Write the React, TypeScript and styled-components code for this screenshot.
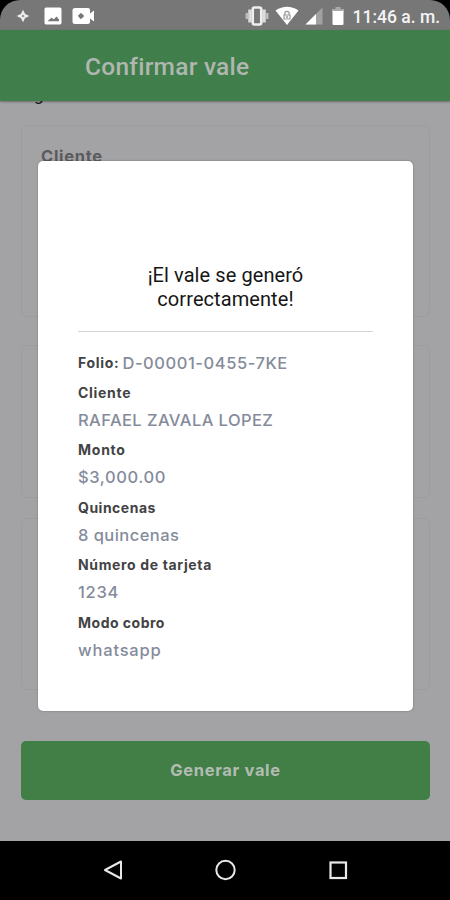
import React from "react";
import styled, { createGlobalStyle } from "styled-components";

const GlobalStyle = createGlobalStyle`
  * { box-sizing: border-box; }
  body { margin: 0; background: #000; font-family: Roboto, "Liberation Sans", sans-serif; }
`;

const Phone = styled.div`
  position: relative;
  width: 450px;
  height: 900px;
  display: flex;
  flex-direction: column;
  overflow: hidden;
  background: #000;
`;

const StatusBar = styled.div`
  height: 30px;
  flex: none;
  display: flex;
  align-items: center;
  justify-content: space-between;
  padding: 2px 10px 0 16px;
  background: #777;
  border-radius: 20px 20px 0 0;
`;

const StatusGroup = styled.div<{ $gap: number }>`
  display: flex;
  align-items: center;
  gap: ${(p) => p.$gap}px;

  svg { display: block; flex: none; }
`;

const Clock = styled.span`
  font-size: 17.5px;
  font-weight: 500;
  line-height: 28px;
  color: #f4f4f4;
  padding-top: 1px;
  white-space: nowrap;
`;

const Header = styled.header`
  position: relative;
  z-index: 1;
  height: 70.5px;
  flex: none;
  display: flex;
  align-items: center;
  padding: 4px 0 0 85px;
  background: #407f4b;
  box-shadow: 0 1px 2px rgba(0, 0, 0, 0.35);
`;

const HeaderTitle = styled.h1`
  margin: 0;
  font-size: 24.5px;
  font-weight: 500;
  line-height: 32px;
  letter-spacing: 0.25px;
  color: #b0b6b0;
`;

const Content = styled.main`
  height: 740px;
  flex: none;
  display: flex;
  flex-direction: column;
  padding: 0 20px 0 21px;
  background: #a3a3a5;
`;

const Intro = styled.div`
  height: 24.5px;
  padding-left: 13px;
  font-size: 17px;
  line-height: 20px;
  color: #111;

  span { display: block; margin-top: -16px; }
`;

const Card = styled.section<{ $height: number; $gap: number }>`
  height: ${(p) => p.$height}px;
  flex: none;
  margin-bottom: ${(p) => p.$gap}px;
  padding: 19px 19px;
  border: 1px solid #9d9d9f;
  border-radius: 6px;
`;

const CardTitle = styled.h2`
  margin: 0;
  font: 700 16.500px/22px Inter, sans-serif;
  letter-spacing: 0.7px;
  color: #5b5b5e;
`;

const SubmitButton = styled.button`
  height: 59.5px;
  flex: none;
  padding: 0;
  border: 0;
  border-radius: 5px;
  background: #417f47;
  color: #b3bcb2;
  font: 700 16.5px/59px Inter, sans-serif;
  letter-spacing: 0.65px;
`;

const NavBar = styled.nav`
  height: 59px;
  flex: none;
  display: flex;
  justify-content: center;
  align-items: center;
  gap: 88px;
  padding-bottom: 1px;

  svg { display: block; }
`;

const Dialog = styled.div`
  position: absolute;
  z-index: 2;
  left: 38px;
  top: 160.5px;
  width: 375px;
  height: 550.5px;
  padding: 102.5px 40px 0;
  border-radius: 5px;
  background: #fff;
  box-shadow: 0 0 2px rgba(0, 0, 0, 0.35);
`;

const DialogTitle = styled.p`
  margin: 0;
  height: 68px;
  text-align: center;
  font-size: 20px;
  line-height: 24px;
  letter-spacing: 0.08px;
  color: #161616;
`;

const Divider = styled.hr`
  margin: 0 0 17px;
  border: 0;
  height: 1px;
  background: #d4d4d4;
`;

const FolioRow = styled.div`
  display: flex;
  align-items: center;
  gap: 3px;
  height: 28px;
`;

const Entry = styled.div`
  height: 57.4px;
  padding-top: 2px;
`;

const Label = styled.div<{ $track: number }>`
  height: 28px;
  font: 700 14px/28px Inter, sans-serif;
  letter-spacing: ${(p) => p.$track}px;
  color: #434345;
  white-space: nowrap;
`;

const Value = styled.div<{ $track: number }>`
  height: 27px;
  font: 500 16.5px/27px Inter, sans-serif;
  letter-spacing: ${(p) => p.$track}px;
  color: #858b9b;
  white-space: nowrap;
`;

const entries = [
  { label: "Cliente", lt: 0.7, value: "RAFAEL ZAVALA LOPEZ", vt: 0.42 },
  { label: "Monto", lt: 0.75, value: "$3,000.00", vt: 0.6 },
  { label: "Quincenas", lt: 0.5, value: "8 quincenas", vt: 0.45 },
  { label: "Número de tarjeta", lt: 0.65, value: "1234", vt: 0.75 },
  { label: "Modo cobro", lt: 0.5, value: "whatsapp", vt: 0.8 },
];

const DiamondIcon = () => (
  <svg width="14" height="14" viewBox="0 0 14 14">
    <path d="M7 3 8.300 5.700 11 7 8.300 8.300 7 11 5.700 8.300 3 7 5.700 5.700Z" fill="none" stroke="#eee" strokeWidth="2" />
  </svg>
);

const ImageIcon = () => (
  <svg width="18" height="18" viewBox="0 0 18 18">
    <path fillRule="evenodd" d="M2 .5h14A1.700 1.700 0 0 1 17.500 2v14a1.700 1.700 0 0 1-1.500 1.500H2A1.700 1.700 0 0 1 .5 16V2A1.700 1.700 0 0 1 2 .5ZM3.500 14.300h11.500V12.500l-2.500-3-2.600 2.800-2.600-1.600Z" fill="#fff" />
  </svg>
);

const VideoIcon = () => (
  <svg width="23" height="18" viewBox="0 0 23 18">
    <path d="M3 1h13a2 2 0 0 1 2 2v3.500L22 3.500v11l-4-3V15a2 2 0 0 1-2 2H3a2.500 2.500 0 0 1-2.500-2.500v-11A2.500 2.500 0 0 1 3 1Z" fill="#fff" />
    <path d="M9 6.300 11.700 9 9 11.700 6.300 9Z" fill="#777" stroke="#777" strokeLinejoin="round" />
  </svg>
);

const VibrateIcon = () => (
  <svg width="24" height="20" viewBox="0 0 24 20">
    <path d="M5 3.500v13M19 3.500v13" stroke="#ddd" strokeWidth="3.500" />
    <path d="M1.800 7v6M22.200 7v6" stroke="#bbb" strokeWidth="2.500" />
    <rect x="7.800" y="1.500" width="8.400" height="17" rx="1.500" fill="#777" stroke="#eee" strokeWidth="2.500" />
  </svg>
);

const WifiIcon = () => (
  <svg width="24" height="20" viewBox="0 0 24 20">
    <path d="M.5 4.500Q12-3 23.500 4.500L12 19Z" fill="#fff" />
    <path d="M9.800 9V7.500a2.200 2.200 0 0 1 4.400 0V9M9 9h6v4H9Z" fill="none" stroke="#999" strokeWidth="1.200" />
    <circle cx="12" cy="11" r="1" fill="#999" />
  </svg>
);

const SignalIcon = () => (
  <svg width="18" height="18" viewBox="0 0 18 18">
    <path d="M17.500.5v17H.5Z" fill="#a2a2a2" />
    <path d="M11 7v10.500H.5Z" fill="#fff" />
  </svg>
);

const BatteryIcon = () => (
  <svg width="12" height="20" viewBox="0 0 12 20">
    <path d="M3.500 1h5v2H12v3H0V3h3.500Z" fill="#aaa" />
    <path d="M.5 5h11v13a1 1 0 0 1-1 1h-9a1 1 0 0 1-1-1Z" fill="#fff" />
  </svg>
);

export default function App() {
  return (
    <>
      <GlobalStyle />
      <Phone>
        <StatusBar>
          <StatusGroup $gap={14}>
            <DiamondIcon />
            <StatusGroup $gap={10}>
              <ImageIcon />
              <VideoIcon />
            </StatusGroup>
          </StatusGroup>
          <StatusGroup $gap={6}>
            <VibrateIcon />
            <WifiIcon />
            <StatusGroup $gap={9}>
              <SignalIcon />
              <BatteryIcon />
              <Clock>11:46 a. m.</Clock>
            </StatusGroup>
          </StatusGroup>
        </StatusBar>
        <Header>
          <HeaderTitle>Confirmar vale</HeaderTitle>
        </Header>
        <Content>
          <Intro><span>g</span></Intro>
          <Card $height={192} $gap={28}>
            <CardTitle>Cliente</CardTitle>
          </Card>
          <Card $height={153} $gap={20} />
          <Card $height={172} $gap={50.5} />
          <SubmitButton>Generar vale</SubmitButton>
        </Content>
        <NavBar>
          <svg width="24" height="24" viewBox="0 0 24 24">
            <path d="M20 3.500v17L4 12Z" fill="none" stroke="#e8e8e8" strokeWidth="2" strokeLinejoin="round" />
          </svg>
          <svg width="24" height="24" viewBox="0 0 24 24">
            <circle cx="12.500" cy="12" r="9.200" fill="none" stroke="#e8e8e8" strokeWidth="2" />
          </svg>
          <svg width="24" height="24" viewBox="0 0 24 24">
            <rect x="5.500" y="4.500" width="15.500" height="15.500" fill="none" stroke="#e8e8e8" strokeWidth="2.200" />
          </svg>
        </NavBar>
        <Dialog role="dialog">
          <DialogTitle>
            ¡El vale se generó
            <br />
            correctamente!
          </DialogTitle>
          <Divider />
          <FolioRow>
            <Label $track={0.7}>Folio:</Label>
            <Value $track={0.56}>D-00001-0455-7KE</Value>
          </FolioRow>
          {entries.map((e) => (
            <Entry key={e.label}>
              <Label $track={e.lt}>{e.label}</Label>
              <Value $track={e.vt}>{e.value}</Value>
            </Entry>
          ))}
        </Dialog>
      </Phone>
    </>
  );
}
